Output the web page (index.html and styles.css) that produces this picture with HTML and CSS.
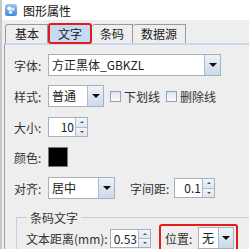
FILE: index.html
```html
<!DOCTYPE html>
<html lang="zh">
<head>
    <meta charset="UTF-8">
    <title>图形属性</title>
    <link rel="stylesheet" href="styles.css">
</head>
<body>

    <div class="window">
        <!-- Title bar -->
        <div class="titlebar">
            <svg class="app-icon" width="12" height="12" viewBox="0 0 12 12">
                <defs>
                    <linearGradient id="iconBg" x1="0" y1="0" x2="0" y2="1">
                        <stop offset="0" stop-color="#9cc8f0"/>
                        <stop offset="1" stop-color="#3d8ad8"/>
                    </linearGradient>
                </defs>
                <rect x="0" y="0" width="12" height="12" rx="2.5" fill="url(#iconBg)"/>
                <circle cx="4.3" cy="4.6" r="2" fill="#ffffff"/>
                <circle cx="7.8" cy="5.2" r="1.6" fill="#d8ecff"/>
                <circle cx="5.6" cy="8.2" r="1.7" fill="#e9f4ff"/>
            </svg>
            <span class="title">图形属性</span>
        </div>

        <!-- Tabs -->
        <div class="tabs">
            <div class="tab">基本</div>
            <div class="tab active">文字</div>
            <div class="tab">条码</div>
            <div class="tab">数据源</div>
        </div>

        <div class="panel">
            <div class="row row-font">
                <span class="label">字体:</span>
                <div class="combo combo-font">
                    <span class="value">方正黑体_GBKZL</span>
                    <span class="arrow"></span>
                </div>
            </div>

            <div class="row row-style">
                <span class="label">样式:</span>
                <div class="combo combo-style">
                    <span class="value">普通</span>
                    <span class="arrow"></span>
                </div>
                <span class="check"></span>
                <span class="check-text">下划线</span>
                <span class="check"></span>
                <span class="check-text">删除线</span>
            </div>

            <div class="row row-size">
                <span class="label">大小:</span>
                <div class="spinner spinner-size">
                    <span class="value">10</span>
                    <span class="spin"><i class="up"></i><i class="down"></i></span>
                </div>
            </div>

            <div class="row row-color">
                <span class="label">颜色:</span>
                <span class="swatch"></span>
            </div>

            <div class="row row-align">
                <span class="label">对齐:</span>
                <div class="combo combo-align">
                    <span class="value">居中</span>
                    <span class="arrow"></span>
                </div>
                <span class="label-spacing">字间距:</span>
                <div class="spinner spinner-spacing">
                    <span class="value">0.1</span>
                    <span class="spin"><i class="up"></i><i class="down"></i></span>
                </div>
            </div>

            <fieldset class="group">
                <legend>条码文字</legend>
                <div class="row row-distance">
                    <span class="label-distance">文本距离(mm):</span>
                    <div class="spinner spinner-distance">
                        <span class="value">0.53</span>
                        <span class="spin"><i class="up"></i><i class="down"></i></span>
                    </div>
                    <div class="highlight">
                        <span class="label-pos">位置:</span>
                        <div class="combo combo-pos">
                            <span class="value">无</span>
                            <span class="arrow"></span>
                        </div>
                    </div>
                </div>
            </fieldset>
        </div>
    </div>

</body>
</html>
```

FILE: styles.css
```css
body {
    margin: 0;
    font-family: "Noto Sans CJK SC", "Liberation Sans", sans-serif;
    font-size: 12px;
    color: #333;
    background-color: #eeeeee;
}

.window {
    width: 249px;
    height: 249px;
    overflow: hidden;
    background-color: #eeeeee;
    border-left: 2px solid #c9c9c9;
    box-sizing: border-box;
}

/* Title bar */
.titlebar {
    height: 20px;
    background-color: #fff;
    display: flex;
    align-items: center;
    padding-left: 3px;
    gap: 6px;
}

.title {
    color: #111;
    font-size: 12px;
}

/* Tabs */
.tabs {
    display: flex;
    padding: 3px 0 0 3px;
    height: 20px;
    align-items: flex-end;
}

.tab {
    height: 18px;
    line-height: 18px;
    padding: 0 8px;
    border: 1px solid #919ba8;
    border-bottom: none;
    border-left: none;
    background-color: #eeeeee;
    color: #222;
    border-top-left-radius: 3px;
}

.tab:first-child {
    border-left: 1px solid #919ba8;
    padding-left: 9px;
}

.tab.active {
    background-color: #c6dbf1;
    border: 2px solid #e31b1b;
    border-radius: 3px;
    height: 17px;
    line-height: 17px;
    margin-bottom: -1px;
    padding: 0 8px;
}

/* Main panel */
.panel {
    margin-left: 2px;
    border-top: 2px solid #c9d9ea;
    border-left: 1px solid #9aa2ad;
    height: 206px;
    padding: 9px 0 0 9px;
    box-sizing: border-box;
}

.row {
    display: flex;
    align-items: center;
}

.label {
    width: 34px;
}

.row-style { margin-top: 9px; }
.row-size { margin-top: 10px; }
.row-color { margin-top: 10px; }
.row-align { margin-top: 10px; }

/* Combo boxes */
.combo {
    height: 20px;
    border: 1px solid #a4b1c1;
    background-color: #fff;
    display: flex;
    align-items: stretch;
    box-sizing: content-box;
}

.combo .value {
    flex: 1;
    padding-left: 3px;
    line-height: 20px;
    color: #222;
}

.combo .arrow {
    width: 15px;
    border-left: 1px solid #a9bcd2;
    background: linear-gradient(#eef3f9, #cbd9e9);
    position: relative;
}

.combo .arrow::after {
    content: "";
    position: absolute;
    left: 4px;
    top: 8px;
    border-left: 4px solid transparent;
    border-right: 4px solid transparent;
    border-top: 4px solid #111;
}

.combo-font { width: 171px; }
.combo-style { width: 54px; }
.combo-align { width: 65px; }
.combo-pos { width: 34px; height: 20px; }
.combo-pos .value { line-height: 20px; }
.combo-pos .arrow { width: 14px; }
.combo-pos .arrow::after { left: 3px; }

/* Checkboxes */
.check {
    width: 9px;
    height: 9px;
    border: 1px solid #8fa2b8;
    background: linear-gradient(#dde5ee, #fbfcfd);
    margin: 0 3px 0 6px;
}

.check-text {
    color: #333;
}

/* Spinners */
.spinner {
    height: 18px;
    border: 1px solid #a4b1c1;
    background-color: #fff;
    display: flex;
}

.spinner .value {
    flex: 1;
    text-align: right;
    line-height: 18px;
    padding-right: 1px;
    color: #222;
}

.spin {
    width: 11px;
    display: flex;
    flex-direction: column;
    border-left: 1px solid #a9bcd2;
}

.spin i {
    flex: 1;
    background: linear-gradient(#f4f6f9, #dfe6ee);
    position: relative;
}

.spin i.up {
    border-bottom: 1px solid #a9bcd2;
}

.spin i::after {
    content: "";
    position: absolute;
    left: 4px;
    top: 3px;
    border-left: 2px solid transparent;
    border-right: 2px solid transparent;
}

.spin i.up::after { border-bottom: 2px solid #555; }
.spin i.down::after { border-top: 2px solid #555; }

.spinner-size { width: 38px; }
.spinner-spacing { width: 39px; }
.spinner-distance { width: 39px; height: 17px; }
.spinner-distance .value { line-height: 17px; }

/* Colour swatch */
.swatch {
    width: 18px;
    height: 18px;
    background-color: #000;
    border: 1px solid #777;
}

.label-spacing {
    margin-left: 15px;
    width: 44px;
}

/* Barcode text group */
.group {
    margin: 12px 0 0 2px;
    padding: 0 0 0 9px;
    border: none;
    border-top: 1px solid #c2d0e0;
    border-left: 1px solid #c2d0e0;
    width: 260px;
}

.group legend {
    padding: 0 3px;
    margin-left: 1px;
    line-height: 13px;
    color: #333;
}

.label-distance {
    width: 84px;
}

.highlight {
    margin-left: 8px;
    display: flex;
    align-items: center;
    border: 2px solid #e31b1b;
    border-radius: 3px;
    padding: 1px 2px 1px 4px;
}

.label-pos {
    width: 33px;
}
```
